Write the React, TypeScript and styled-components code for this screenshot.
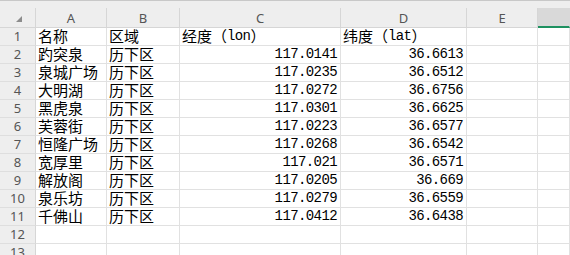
import styled, { createGlobalStyle } from "styled-components";

const COLS = "36px 71px 73px 161px 126px 71px 1fr";

const Global = createGlobalStyle`
    html, body {
        margin: 0;
        padding: 0;
        background: #ffffff;
        overflow: hidden;
    }
`;

const Sheet = styled.div`
    width: 570px;
    height: 255px;
    overflow: hidden;
    border-top: 1px solid #c8c8c8;
    background: #ffffff;
`;

const HeaderRow = styled.div`
    display: grid;
    grid-template-columns: ${COLS};
    background: #eeeeee;
    padding-top: 7px;
`;

const Corner = styled.div`
    height: 20px;
    box-sizing: border-box;
    border-right: 1px solid #d6d6d6;
    border-bottom: 1px solid #d6d6d6;
    display: flex;
    align-items: flex-end;
    justify-content: center;
    padding-bottom: 5px;
    padding-left: 2px;
`;

const Triangle = styled.div`
    width: 0;
    height: 0;
    border-left: 6px solid transparent;
    border-bottom: 6px solid #8c8c8c;
`;

const ColHead = styled.div<{ $active?: boolean }>`
    height: 20px;
    box-sizing: border-box;
    display: flex;
    align-items: center;
    justify-content: center;
    border-right: 1px solid ${p => (p.$active ? "transparent" : "#d6d6d6")};
    border-bottom: ${p => (p.$active ? "2px solid #1e9160" : "1px solid #d6d6d6")};
    background: ${p => (p.$active ? "#d9d9d9" : "transparent")};
    font-family: "Noto Sans", "Liberation Sans", sans-serif;
    font-size: 13px;
    line-height: 16px;
    color: #555555;
`;

const Row = styled.div`
    display: grid;
    grid-template-columns: ${COLS};
`;

const RowNum = styled.div`
    height: 18px;
    box-sizing: border-box;
    background: #eeeeee;
    border-right: 1px solid #d6d6d6;
    border-bottom: 1px solid #dedede;
    display: flex;
    align-items: center;
    justify-content: center;
    font-family: "Noto Sans", "Liberation Sans", sans-serif;
    font-size: 13px;
    line-height: 15px;
    color: #555555;
`;

const Cell = styled.div<{ $num?: boolean }>`
    height: 18px;
    box-sizing: border-box;
    border-right: 1px solid #e1e1e1;
    border-bottom: 1px solid #e1e1e1;
    display: flex;
    align-items: flex-end;
    justify-content: ${p => (p.$num ? "flex-end" : "flex-start")};
    padding: 0 3px 1px 2px;
    white-space: nowrap;
    font-family: ${p => (p.$num ? `"Liberation Mono", monospace` : `"Noto Sans CJK SC", sans-serif`)};
    font-size: ${p => (p.$num ? "14px" : "15px")};
    letter-spacing: ${p => (p.$num ? "-0.6px" : "0")};
    line-height: 16px;
    color: #000000;
`;

const Latin = styled.span`
    font-family: "Liberation Mono", monospace;
    font-size: 14px;
    letter-spacing: -0.6px;
`;

const rows = [
    ["趵突泉", "历下区", "117.0141", "36.6613"],
    ["泉城广场", "历下区", "117.0235", "36.6512"],
    ["大明湖", "历下区", "117.0272", "36.6756"],
    ["黑虎泉", "历下区", "117.0301", "36.6625"],
    ["芙蓉街", "历下区", "117.0223", "36.6577"],
    ["恒隆广场", "历下区", "117.0268", "36.6542"],
    ["宽厚里", "历下区", "117.021", "36.6571"],
    ["解放阁", "历下区", "117.0205", "36.669"],
    ["泉乐坊", "历下区", "117.0279", "36.6559"],
    ["千佛山", "历下区", "117.0412", "36.6438"],
];

const letters = ["A", "B", "C", "D", "E"];

export default function App() {
    return <>
        <Global />
        <Sheet>
            <HeaderRow>
                <Corner><Triangle /></Corner>
                {letters.map(l => <ColHead key={l}>{l}</ColHead>)}
                <ColHead $active />
            </HeaderRow>
            <Row>
                <RowNum>1</RowNum>
                <Cell>名称</Cell>
                <Cell>区域</Cell>
                <Cell>经度（<Latin>lon</Latin>）</Cell>
                <Cell>纬度（<Latin>lat</Latin>）</Cell>
                <Cell />
                <Cell />
            </Row>
            {rows.map((r, i) => (
                <Row key={r[0]}>
                    <RowNum>{i + 2}</RowNum>
                    <Cell>{r[0]}</Cell>
                    <Cell>{r[1]}</Cell>
                    <Cell $num>{r[2]}</Cell>
                    <Cell $num>{r[3]}</Cell>
                    <Cell />
                    <Cell />
                </Row>
            ))}
            {[12, 13].map(n => (
                <Row key={n}>
                    <RowNum>{n}</RowNum>
                    <Cell />
                    <Cell />
                    <Cell />
                    <Cell />
                    <Cell />
                    <Cell />
                </Row>
            ))}
        </Sheet>
    </>;
}
